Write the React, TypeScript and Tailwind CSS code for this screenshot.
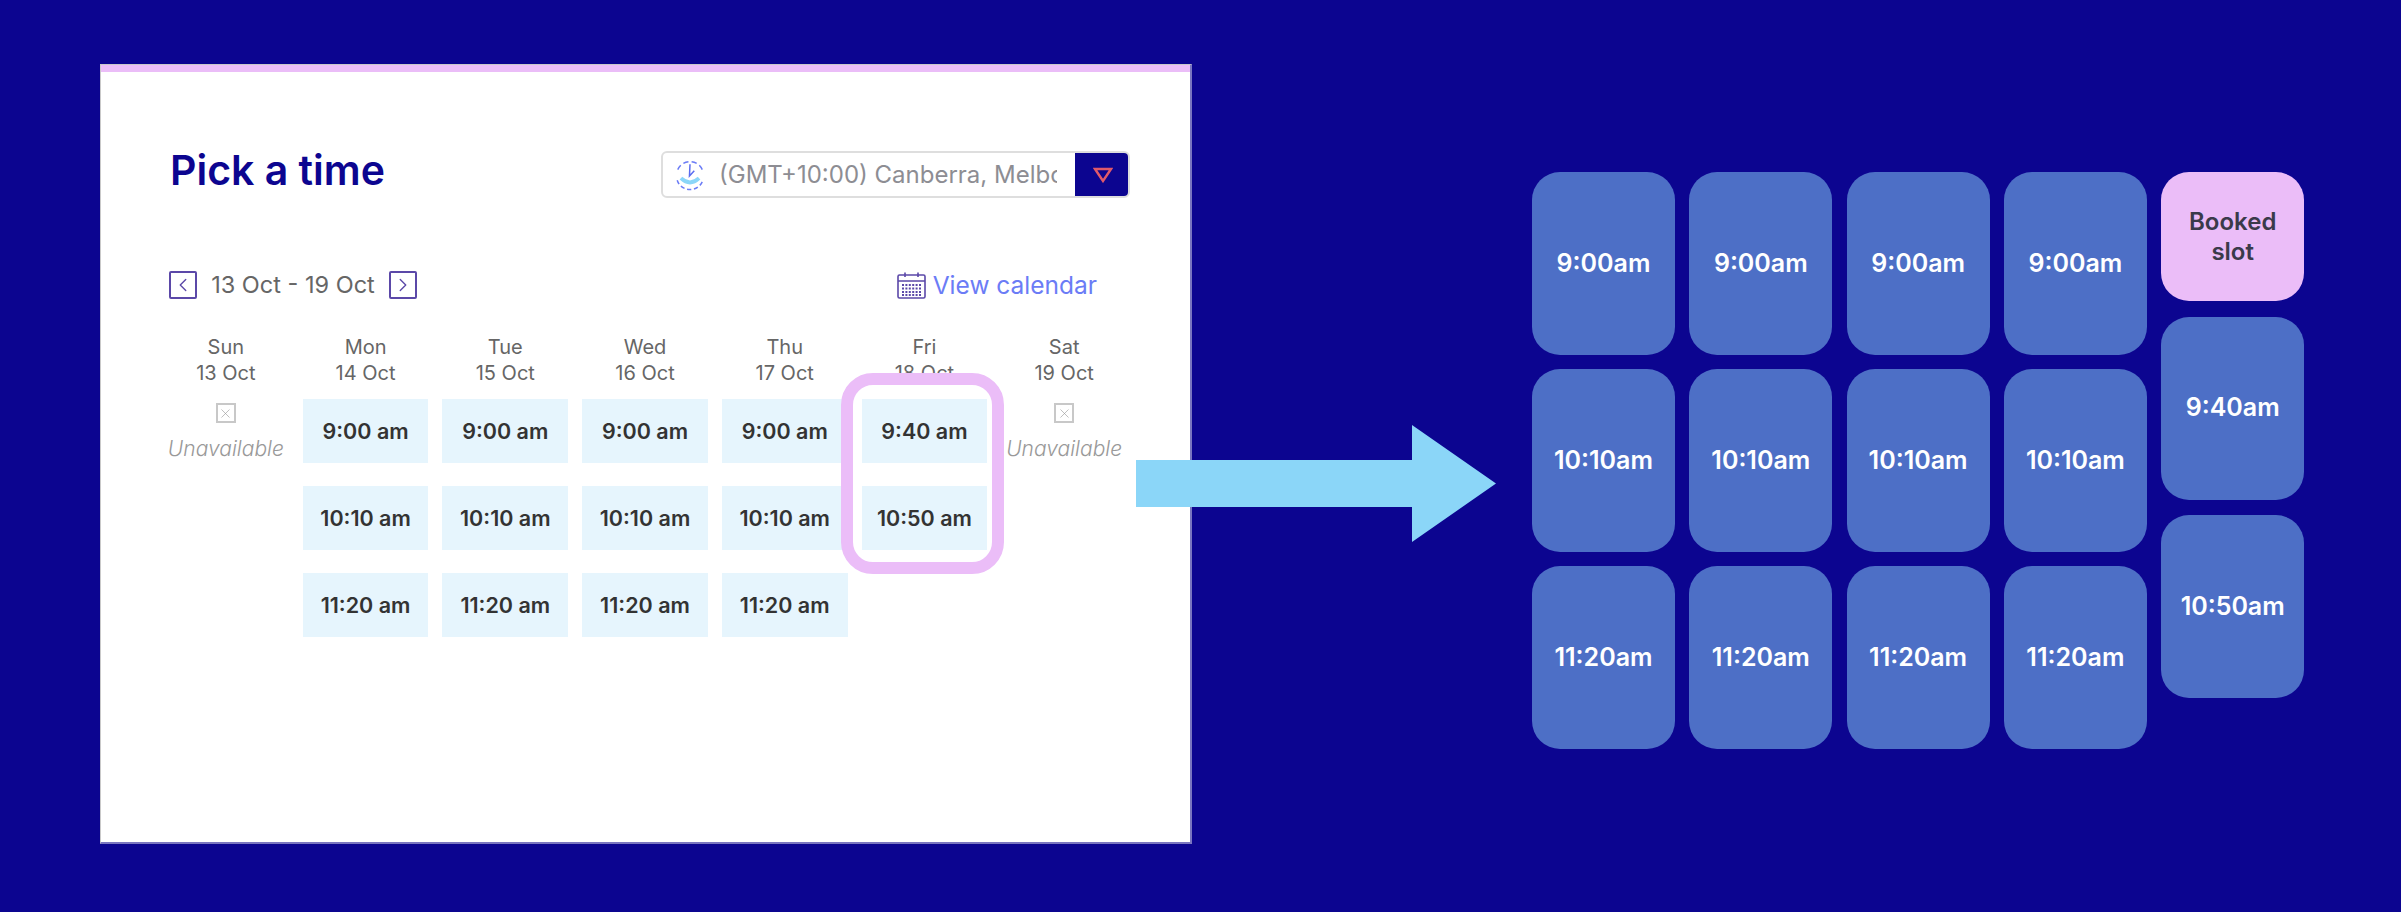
import React from 'react'
import { ChevronLeft, ChevronRight, X } from 'lucide-react'

const days = [
  { name: 'Sun', date: '13 Oct', slots: [] as string[] },
  { name: 'Mon', date: '14 Oct', slots: ['9:00 am', '10:10 am', '11:20 am'] },
  { name: 'Tue', date: '15 Oct', slots: ['9:00 am', '10:10 am', '11:20 am'] },
  { name: 'Wed', date: '16 Oct', slots: ['9:00 am', '10:10 am', '11:20 am'] },
  { name: 'Thu', date: '17 Oct', slots: ['9:00 am', '10:10 am', '11:20 am'] },
  { name: 'Fri', date: '18 Oct', slots: ['9:40 am', '10:50 am'], highlight: true },
  { name: 'Sat', date: '19 Oct', slots: [] as string[] },
]

function ClockIcon() {
  return (
    <svg width="30" height="32" viewBox="0 0 27 30" fill="none" className="shrink-0">
      <path d="M2 10 A12.5 12.5 0 0 1 25 10" stroke="#6b7cf6" strokeWidth="1.4" strokeDasharray="5 3" />
      <path d="M1.5 20 A12.5 12 0 0 0 25.5 20" stroke="#6b7cf6" strokeWidth="1.4" strokeDasharray="4 2.5" />
      <path d="M5 18 Q13.5 26 22 18" stroke="#8bd6f8" strokeWidth="3.6" />
      <path d="M13.5 5 L13 16 L17.5 11" stroke="#5a6cf0" strokeWidth="1.4" />
    </svg>
  )
}

function CalendarIcon() {
  return (
    <svg width="29" height="27" viewBox="0 0 29 27" fill="none" className="shrink-0">
      <rect x="1" y="3" width="27" height="23" rx="1.5" stroke="#5b48a8" strokeWidth="1.6" />
      <path d="M1 9 H28 M8 0.5 V5 M21 0.5 V5" stroke="#5b48a8" strokeWidth="1.6" />
      <path d="M5 13 H24 M5 16.5 H24 M5 20 H24 M5 23 H24" stroke="#5b48a8" strokeWidth="1.8" strokeDasharray="2 1.4" />
    </svg>
  )
}

function Slot({ label }: { label: string }) {
  return (
    <div className="h-[64px] bg-[#e6f5fd] flex items-center justify-center text-[21.5px] font-semibold text-[#333333] whitespace-nowrap">
      {label}
    </div>
  )
}

function Unavailable() {
  return (
    <div className="flex flex-col items-center pt-[4px]">
      <div className="w-[20px] h-[20px] border-2 border-[#c8c8c8] flex items-center justify-center">
        <X size={15} strokeWidth={1} color="#999999" />
      </div>
      <span className="mt-[13px] text-[21px] italic font-light text-[#999999] leading-[26px] whitespace-nowrap">Unavailable</span>
    </div>
  )
}

function Tile({ label }: { label: string }) {
  return (
    <div className="w-[143px] h-[183px] rounded-[28px] bg-[#4d6fc6] flex items-center justify-center text-[25px] font-semibold text-white">
      {label}
    </div>
  )
}

export default function App() {
  return (
    <div
      className="relative w-[2401px] h-[912px] bg-[#0c0590] flex items-start pl-[100px] pt-[64px] overflow-hidden"
      style={{ fontFamily: 'Inter, "Noto Sans", sans-serif' }}
    >
      {/* Booking card */}
      <div className="w-[1092px] h-[780px] shrink-0 bg-white border-t border-r-2 border-b-2 border-l border-t-[#c9c9c9] border-l-[#c9c9c9] border-r-[#7a76c0] border-b-[#7a76c0]">
        <div className="h-[7px] bg-[#ebbdf8]" />
        <div className="pt-[80px] pl-[62px] pr-[60px]">
          <div className="flex items-center justify-between h-[46px]">
            <h1 className="ml-[7px] -mt-[9px] text-[41px] font-semibold text-[#0c0590] leading-none">Pick a time</h1>
            <div className="w-[469px] h-[47px] -mt-[1px] shrink-0 flex rounded-[6px] border-2 border-[#dedede] overflow-hidden">
              <div className="flex-1 min-w-0 flex items-center pl-[12px] pr-[18px] gap-[14px]">
                <ClockIcon />
                <span className="text-[24px] text-[#8d8d93] whitespace-nowrap overflow-hidden">(GMT+10:00) Canberra, Melbourne, Sydney</span>
              </div>
              <div className="w-[55px] bg-[#0c0590] flex items-center justify-center -my-[2px] -mr-[2px]">
                <svg width="20" height="16" viewBox="0 0 20 16" fill="none">
                  <path d="M2 2 H18 L10 14 Z" stroke="#e0596a" strokeWidth="2.4" />
                </svg>
              </div>
            </div>
          </div>

          <div className="mt-[73px] h-[28px] flex items-center justify-between">
            <div className="ml-[6px] flex items-center text-[23.5px] text-[#666666]">
              <div className="w-[28px] h-[28px] border-2 border-[#5b48a8] rounded-[2px] flex items-center justify-center">
                <ChevronLeft size={22} strokeWidth={1.5} color="#5b48a8" />
              </div>
              <span className="w-[192px] text-center whitespace-nowrap">13 Oct - 19 Oct</span>
              <div className="w-[28px] h-[28px] border-2 border-[#5b48a8] rounded-[2px] flex items-center justify-center">
                <ChevronRight size={22} strokeWidth={1.5} color="#5b48a8" />
              </div>
            </div>
            <div className="mr-[33px] flex items-center gap-[7px]">
              <CalendarIcon />
              <span className="text-[24.5px] text-[#6b7cf6] whitespace-nowrap">View calendar</span>
            </div>
          </div>

          {/* Week columns */}
          <div className="mt-[35px] grid grid-cols-7 gap-x-[14px] w-[964px]">
            {days.map((day) => (
              <div key={day.name} className="min-w-0">
                <div className="text-center text-[20px] leading-[26px] text-[#666666]">
                  <p>{day.name}</p>
                  <p className="whitespace-nowrap">{day.date}</p>
                </div>
                <div className="relative mt-[13px] flex flex-col gap-[23px]">
                  {day.slots.length === 0 && <Unavailable />}
                  {day.slots.map((slot) => (
                    <Slot key={slot} label={slot} />
                  ))}
                  {day.highlight && (
                    <div className="absolute -left-[21px] -right-[17px] -top-[26px] -bottom-[24px] border-[12px] border-[#ebbdf8] rounded-[32px]" />
                  )}
                </div>
              </div>
            ))}
          </div>
        </div>
      </div>

      {/* Simplified grid */}
      <div className="ml-[340px] mt-[108px] flex gap-[14.3px]">
        {[0, 1, 2, 3].map((col) => (
          <div key={col} className="flex flex-col gap-[14px]">
            <Tile label="9:00am" />
            <Tile label="10:10am" />
            <Tile label="11:20am" />
          </div>
        ))}
        <div className="flex flex-col gap-[15.5px]">
          <div className="w-[143px] h-[129px] rounded-[28px] bg-[#ebbdf8] flex items-center justify-center text-center text-[24px] font-semibold leading-[30px] text-[#3a3a4a]">
            Booked<br />slot
          </div>
          <Tile label="9:40am" />
          <Tile label="10:50am" />
        </div>
      </div>

      {/* Arrow between the two */}
      <svg className="absolute left-[1136px] top-[425px]" width="361" height="117" viewBox="0 0 361 117">
        <path d="M0 35 H276 V0 L360 58.5 L276 117 V82 H0 Z" fill="#8bd6f8" />
      </svg>
    </div>
  )
}
